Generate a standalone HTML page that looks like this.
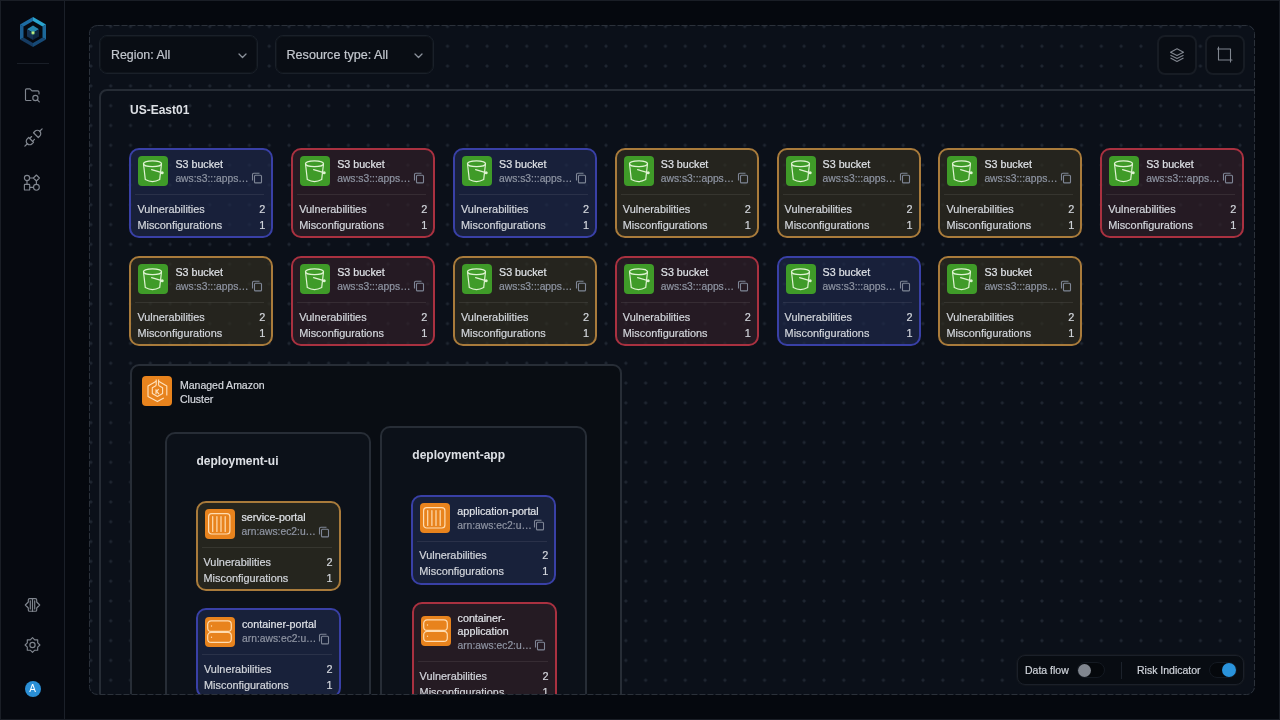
<!DOCTYPE html>
<html><head><meta charset="utf-8"><style>
*{margin:0;padding:0;box-sizing:border-box}
html,body{width:1280px;height:720px;overflow:hidden;background:#05080e;font-family:"Liberation Sans",sans-serif;position:relative}
#root{position:absolute;left:0;top:0;width:1280px;height:720px;will-change:transform}
.abs{position:absolute}
#frame{position:absolute;left:0;top:0;width:1280px;height:720px;border:1px solid #1a1e26;pointer-events:none;z-index:50}
#side{position:absolute;left:0;top:0;width:65px;height:720px;background:#060910;border-right:1px solid #1b2029}
#side svg.i{position:absolute}
#main{position:absolute;left:89px;top:25px;width:1166px;height:670px;border:1px solid transparent;border-radius:8px;overflow:hidden;
 background-color:#0b1019;
 background-image:radial-gradient(circle at center,#1f2631 0,#1f2631 1.2px,rgba(0,0,0,0) 1.9px);
 background-size:19.82px 19.82px;background-position:10.8px 10.35px}
.sel{position:absolute;top:9px;height:39px;border:1px solid #1a2029;box-shadow:inset 0 0 0 1px #10151c;border-radius:8px;background:#090d14;color:#c3c7ce;font-size:12.3px}
.sel span{position:absolute;left:11px;top:11.5px;line-height:14px;white-space:nowrap}
.sel svg{position:absolute;top:17px}
.btn{position:absolute;top:9px;width:40px;height:40px;border:2px solid #171c24;border-radius:8px;background:#090d14}
.btn svg{position:absolute}
#region{position:absolute;left:9px;top:63px;width:1300px;height:800px;border:2px solid #262c35;border-radius:8px}
.rt{position:absolute;color:#dde0e5;font-weight:bold;white-space:nowrap}
.card{position:absolute;border:2px solid;border-radius:10px;color:#d6d9df}
.card .ic{position:absolute;left:7px;top:6px;width:30px;height:30px;border-radius:4px}
.card .ic svg{position:absolute;left:0;top:0}
.ic.g{background:#3f9b28}
.ic.o{background:#e8831d}
.card .ttl{position:absolute;left:44px;top:8px;font-size:10.7px;line-height:13px;color:#dfe2e7;white-space:nowrap}
.card .sub{position:absolute;left:44px;font-size:10.3px;line-height:12px;color:#8f95a3;white-space:nowrap}
.card .cp{position:absolute;left:120px;width:12px;height:12px}
.card .cp svg{position:absolute;left:0;top:0}
.card .dv{position:absolute;left:4px;right:7px;height:1px;background:rgba(255,255,255,0.08)}
.card .m{position:absolute;left:6px;right:6px;font-size:10.9px;line-height:12px;color:#d3d6dc;white-space:nowrap}
.card .m b{position:absolute;right:0;top:0;font-weight:normal}
#cluster{position:absolute;left:39.5px;top:338px;width:492.5px;height:400px;border:2px solid #272d36;border-radius:9px;background:#090d13}
.dep{position:absolute;height:400px;border:2px solid #272d36;border-radius:10px;background:#0c1119}
#dock{position:absolute;left:927px;top:629px;width:227px;height:30px;border:1px solid #1b2029;box-shadow:0 0 0 1px #11151c;border-radius:8px;background:#080c12;color:#cfd3da;font-size:10.5px}
#dock span{position:absolute;top:8px;line-height:12px;white-space:nowrap}
.card .m,.card .ttl,.card .sub,.sel span,#dock span,.mg{-webkit-text-stroke:0.2px currentColor}
.tg{position:absolute;top:6px;width:28px;height:16px;border-radius:8px;background:#05080c;border:1px solid #141a22}
.tg i{position:absolute;top:0px;width:14px;height:14px;border-radius:7px}
</style></head><body><div id="root">
<div id="side">
 <svg class="i" style="left:18px;top:15px" width="30" height="35" viewBox="0 0 30 35">
  <defs>
   <radialGradient id="gl"><stop offset="0" stop-color="#f2ffb0"/><stop offset="0.4" stop-color="#a6dc6e"/><stop offset="1" stop-color="#2b8a8a" stop-opacity="0"/></radialGradient>
   <filter id="sf" x="-20%" y="-20%" width="140%" height="140%"><feGaussianBlur stdDeviation="0.4"/></filter>
  </defs>
  <g filter="url(#sf)">
  <polygon points="15,2 28,9.5 24.5,11.5 15,6" fill="#2aa4cf"/>
  <polygon points="28,9.5 28,24.5 24.5,22.5 24.5,11.5" fill="#1c689a"/>
  <polygon points="28,24.5 15,32 15,28 24.5,22.5" fill="#164a76"/>
  <polygon points="15,32 2,24.5 5.5,22.5 15,28" fill="#133b62"/>
  <polygon points="2,24.5 2,9.5 5.5,11.5 5.5,22.5" fill="#1b5f93"/>
  <polygon points="2,9.5 15,2 15,6 5.5,11.5" fill="#1e6ca3"/>
  <polygon points="15,10.6 21,14.2 15,17.8 9,14.2" fill="#2785ad"/>
  <polygon points="9,14.2 15,17.8 15,25 9,21.4" fill="#123052"/>
  <polygon points="21,14.2 15,17.8 15,25 21,21.4" fill="#0d2540"/>
  <circle cx="15" cy="17.8" r="2.6" fill="url(#gl)"/>
  </g>
 </svg>
 <div class="abs" style="left:17px;top:63px;width:32px;height:1px;background:#191e27"></div>
 <svg class="i" style="left:24px;top:87px" width="17" height="16" viewBox="0 0 17 16"><g fill="none" stroke="#80868f" stroke-width="1.15" stroke-linecap="round" stroke-linejoin="round"><path d="M7 13.5 H2.6 Q1.5 13.5 1.5 12.4 V3 Q1.5 1.9 2.6 1.9 H6 L8 3.9 H13.6 Q15 3.9 15 5.2 V7"/><circle cx="11.4" cy="11" r="2.6"/><path d="M13.3 12.9 L15.3 14.9"/></g></svg>
 <svg class="i" style="left:21.5px;top:126px" width="23" height="23" viewBox="0 0 24 24"><g fill="none" stroke="#80868f" stroke-width="1.25" stroke-linecap="round" stroke-linejoin="round"><path d="M7 12l5 5l-1.5 1.5a3.536 3.536 0 1 1 -5 -5l1.5 -1.5z"/><path d="M17 12l-5 -5l1.5 -1.5a3.536 3.536 0 1 1 5 5l-1.5 1.5z"/><path d="M3 21l2.5 -2.5"/><path d="M18.5 5.5l2.5 -2.5"/><path d="M10 11l-2 2"/><path d="M13 14l-2 2"/></g></svg>
 <svg class="i" style="left:23px;top:173px" width="19" height="19" viewBox="0 0 19 19"><g fill="none" stroke="#80868f" stroke-width="1.15" stroke-linejoin="round"><circle cx="4" cy="5" r="2.6"/><path d="M13.4 2 L16.4 5 L13.4 8 L10.4 5 Z"/><rect x="1.4" y="11.4" width="5.3" height="5.6" rx="0.6"/><circle cx="13.4" cy="14.3" r="2.9"/><path d="M6.6 5 H10.4 M4 7.6 V11.4 M13.4 8 V11.4 M6.7 14.3 H10.5"/></g></svg>
 <svg class="i" style="left:24px;top:597px" width="17" height="16" viewBox="0 0 17 16"><g fill="none" stroke="#80868f" stroke-width="1.15" stroke-linecap="round" stroke-linejoin="round"><path d="M8.5 1.6 V14.2"/><path d="M8.5 1.6 H5.6 Q4.3 1.6 4.3 2.9 V5 L1.3 8 L4.3 11 V12.9 Q4.3 14.2 5.6 14.2 H8.5"/><path d="M8.5 1.6 H11.4 Q12.7 1.6 12.7 2.9 V5 L15.7 8 L12.7 11 V12.9 Q12.7 14.2 11.4 14.2 H8.5"/><path d="M6.3 3.8 V12 M10.7 3.8 V12"/></g></svg>
 <svg class="i" style="left:24px;top:636px" width="17" height="18" viewBox="-8.5 -9 17 18"><g fill="none" stroke="#80868f" stroke-width="1.15" stroke-linejoin="round"><path d="M0 -7.4 L2.2 -5.2 H5.2 V-2.2 L7.4 0 L5.2 2.2 V5.2 H2.2 L0 7.4 L-2.2 5.2 H-5.2 V2.2 L-7.4 0 L-5.2 -2.2 V-5.2 H-2.2 Z"/><circle cx="0" cy="0" r="2.6"/></g></svg>
 <div class="abs" style="left:24.6px;top:680.8px;width:16px;height:16px;border-radius:8px;background:#2a8fd6;color:#fff;font-size:10px;font-weight:normal;text-align:center;line-height:16px">A</div>
</div>

<div id="main">
 <div class="sel" style="left:9px;width:159px"><span style="font-size:12.4px">Region: All</span><svg style="left:138px" width="9" height="6" viewBox="0 0 9 6"><path d="M1 1 L4.5 4.5 L8 1" fill="none" stroke="#8c929c" stroke-width="1.3" stroke-linecap="round" stroke-linejoin="round"/></svg></div>
 <div class="sel" style="left:184.5px;width:159px"><span style="font-size:12.6px;top:11.6px">Resource type: All</span><svg style="left:138px" width="9" height="6" viewBox="0 0 9 6"><path d="M1 1 L4.5 4.5 L8 1" fill="none" stroke="#8c929c" stroke-width="1.3" stroke-linecap="round" stroke-linejoin="round"/></svg></div>
 <div class="btn" style="left:1067px">
  <svg style="left:11px;top:11px" width="15" height="15" viewBox="0 0 15 15"><g fill="none" stroke="#80868f" stroke-width="1.1" stroke-linejoin="round"><path d="M7 0.8 L13.5 4.2 L7 7.6 L0.5 4.2 Z"/><path d="M0.5 7.2 L7 10.6 L13.5 7.2"/><path d="M0.5 10 L7 13.4 L13.5 10"/></g></svg>
 </div>
 <div class="btn" style="left:1115px">
  <svg style="left:10px;top:9px" width="17" height="17" viewBox="0 0 17 17"><g fill="none" stroke="#80868f" stroke-width="1.1" stroke-linecap="round" stroke-linejoin="round"><path d="M1.5 1 V14 H15"/><path d="M0 3 H13.5 V16"/></g></svg>
 </div>
 <div id="region"></div>
 <div class="rt" style="left:40px;top:76.7px;font-size:12px">US-East01</div>
 <div class="card" style="left:39.4px;top:121.5px;width:144px;height:90px;border-color:#3940a6;background:rgba(30,40,72,0.7)">
<div class="ic g" style="top:6px"><svg width="30" height="30" viewBox="0 0 30 30"><g fill="none" stroke="#dff3d2" stroke-width="1.2" stroke-linecap="round" stroke-linejoin="round"><ellipse cx="14.5" cy="7.8" rx="9" ry="2.9"/><path d="M5.5 7.8 L7.3 23.6 Q14.5 27.6 21.7 23.6 L23.5 7.8"/><path d="M13.6 13.6 L23.8 16.6"/></g><circle cx="24.2" cy="16.7" r="1.5" fill="#dff3d2"/></svg></div>
<div class="ttl">S3 bucket</div>
<div class="sub" style="top:23px">aws:s3:::apps…</div>
<div class="cp" style="top:22.5px"><svg width="12" height="12" viewBox="0 0 12 12"><g fill="none" stroke="#7f8696" stroke-width="1.1"><path d="M1.5 8.5 V2.5 Q1.5 1.2 2.8 1.2 H8.5"/><rect x="3.5" y="3.3" width="7" height="7.6" rx="1"/></g></svg></div>
<div class="dv" style="top:44px"></div>
<div class="m" style="top:53.5px"><span>Vulnerabilities</span><b>2</b></div>
<div class="m" style="top:69.5px"><span>Misconfigurations</span><b>1</b></div>
</div><div class="card" style="left:201.2px;top:121.5px;width:144px;height:90px;border-color:#a93140;background:rgba(49,32,40,0.7)">
<div class="ic g" style="top:6px"><svg width="30" height="30" viewBox="0 0 30 30"><g fill="none" stroke="#dff3d2" stroke-width="1.2" stroke-linecap="round" stroke-linejoin="round"><ellipse cx="14.5" cy="7.8" rx="9" ry="2.9"/><path d="M5.5 7.8 L7.3 23.6 Q14.5 27.6 21.7 23.6 L23.5 7.8"/><path d="M13.6 13.6 L23.8 16.6"/></g><circle cx="24.2" cy="16.7" r="1.5" fill="#dff3d2"/></svg></div>
<div class="ttl">S3 bucket</div>
<div class="sub" style="top:23px">aws:s3:::apps…</div>
<div class="cp" style="top:22.5px"><svg width="12" height="12" viewBox="0 0 12 12"><g fill="none" stroke="#7f8696" stroke-width="1.1"><path d="M1.5 8.5 V2.5 Q1.5 1.2 2.8 1.2 H8.5"/><rect x="3.5" y="3.3" width="7" height="7.6" rx="1"/></g></svg></div>
<div class="dv" style="top:44px"></div>
<div class="m" style="top:53.5px"><span>Vulnerabilities</span><b>2</b></div>
<div class="m" style="top:69.5px"><span>Misconfigurations</span><b>1</b></div>
</div><div class="card" style="left:363.0px;top:121.5px;width:144px;height:90px;border-color:#3940a6;background:rgba(30,40,72,0.7)">
<div class="ic g" style="top:6px"><svg width="30" height="30" viewBox="0 0 30 30"><g fill="none" stroke="#dff3d2" stroke-width="1.2" stroke-linecap="round" stroke-linejoin="round"><ellipse cx="14.5" cy="7.8" rx="9" ry="2.9"/><path d="M5.5 7.8 L7.3 23.6 Q14.5 27.6 21.7 23.6 L23.5 7.8"/><path d="M13.6 13.6 L23.8 16.6"/></g><circle cx="24.2" cy="16.7" r="1.5" fill="#dff3d2"/></svg></div>
<div class="ttl">S3 bucket</div>
<div class="sub" style="top:23px">aws:s3:::apps…</div>
<div class="cp" style="top:22.5px"><svg width="12" height="12" viewBox="0 0 12 12"><g fill="none" stroke="#7f8696" stroke-width="1.1"><path d="M1.5 8.5 V2.5 Q1.5 1.2 2.8 1.2 H8.5"/><rect x="3.5" y="3.3" width="7" height="7.6" rx="1"/></g></svg></div>
<div class="dv" style="top:44px"></div>
<div class="m" style="top:53.5px"><span>Vulnerabilities</span><b>2</b></div>
<div class="m" style="top:69.5px"><span>Misconfigurations</span><b>1</b></div>
</div><div class="card" style="left:524.8px;top:121.5px;width:144px;height:90px;border-color:#a97b3b;background:rgba(49,45,33,0.7)">
<div class="ic g" style="top:6px"><svg width="30" height="30" viewBox="0 0 30 30"><g fill="none" stroke="#dff3d2" stroke-width="1.2" stroke-linecap="round" stroke-linejoin="round"><ellipse cx="14.5" cy="7.8" rx="9" ry="2.9"/><path d="M5.5 7.8 L7.3 23.6 Q14.5 27.6 21.7 23.6 L23.5 7.8"/><path d="M13.6 13.6 L23.8 16.6"/></g><circle cx="24.2" cy="16.7" r="1.5" fill="#dff3d2"/></svg></div>
<div class="ttl">S3 bucket</div>
<div class="sub" style="top:23px">aws:s3:::apps…</div>
<div class="cp" style="top:22.5px"><svg width="12" height="12" viewBox="0 0 12 12"><g fill="none" stroke="#7f8696" stroke-width="1.1"><path d="M1.5 8.5 V2.5 Q1.5 1.2 2.8 1.2 H8.5"/><rect x="3.5" y="3.3" width="7" height="7.6" rx="1"/></g></svg></div>
<div class="dv" style="top:44px"></div>
<div class="m" style="top:53.5px"><span>Vulnerabilities</span><b>2</b></div>
<div class="m" style="top:69.5px"><span>Misconfigurations</span><b>1</b></div>
</div><div class="card" style="left:686.6px;top:121.5px;width:144px;height:90px;border-color:#a97b3b;background:rgba(49,45,33,0.7)">
<div class="ic g" style="top:6px"><svg width="30" height="30" viewBox="0 0 30 30"><g fill="none" stroke="#dff3d2" stroke-width="1.2" stroke-linecap="round" stroke-linejoin="round"><ellipse cx="14.5" cy="7.8" rx="9" ry="2.9"/><path d="M5.5 7.8 L7.3 23.6 Q14.5 27.6 21.7 23.6 L23.5 7.8"/><path d="M13.6 13.6 L23.8 16.6"/></g><circle cx="24.2" cy="16.7" r="1.5" fill="#dff3d2"/></svg></div>
<div class="ttl">S3 bucket</div>
<div class="sub" style="top:23px">aws:s3:::apps…</div>
<div class="cp" style="top:22.5px"><svg width="12" height="12" viewBox="0 0 12 12"><g fill="none" stroke="#7f8696" stroke-width="1.1"><path d="M1.5 8.5 V2.5 Q1.5 1.2 2.8 1.2 H8.5"/><rect x="3.5" y="3.3" width="7" height="7.6" rx="1"/></g></svg></div>
<div class="dv" style="top:44px"></div>
<div class="m" style="top:53.5px"><span>Vulnerabilities</span><b>2</b></div>
<div class="m" style="top:69.5px"><span>Misconfigurations</span><b>1</b></div>
</div><div class="card" style="left:848.4px;top:121.5px;width:144px;height:90px;border-color:#a97b3b;background:rgba(49,45,33,0.7)">
<div class="ic g" style="top:6px"><svg width="30" height="30" viewBox="0 0 30 30"><g fill="none" stroke="#dff3d2" stroke-width="1.2" stroke-linecap="round" stroke-linejoin="round"><ellipse cx="14.5" cy="7.8" rx="9" ry="2.9"/><path d="M5.5 7.8 L7.3 23.6 Q14.5 27.6 21.7 23.6 L23.5 7.8"/><path d="M13.6 13.6 L23.8 16.6"/></g><circle cx="24.2" cy="16.7" r="1.5" fill="#dff3d2"/></svg></div>
<div class="ttl">S3 bucket</div>
<div class="sub" style="top:23px">aws:s3:::apps…</div>
<div class="cp" style="top:22.5px"><svg width="12" height="12" viewBox="0 0 12 12"><g fill="none" stroke="#7f8696" stroke-width="1.1"><path d="M1.5 8.5 V2.5 Q1.5 1.2 2.8 1.2 H8.5"/><rect x="3.5" y="3.3" width="7" height="7.6" rx="1"/></g></svg></div>
<div class="dv" style="top:44px"></div>
<div class="m" style="top:53.5px"><span>Vulnerabilities</span><b>2</b></div>
<div class="m" style="top:69.5px"><span>Misconfigurations</span><b>1</b></div>
</div><div class="card" style="left:1010.2px;top:121.5px;width:144px;height:90px;border-color:#a93140;background:rgba(49,32,40,0.7)">
<div class="ic g" style="top:6px"><svg width="30" height="30" viewBox="0 0 30 30"><g fill="none" stroke="#dff3d2" stroke-width="1.2" stroke-linecap="round" stroke-linejoin="round"><ellipse cx="14.5" cy="7.8" rx="9" ry="2.9"/><path d="M5.5 7.8 L7.3 23.6 Q14.5 27.6 21.7 23.6 L23.5 7.8"/><path d="M13.6 13.6 L23.8 16.6"/></g><circle cx="24.2" cy="16.7" r="1.5" fill="#dff3d2"/></svg></div>
<div class="ttl">S3 bucket</div>
<div class="sub" style="top:23px">aws:s3:::apps…</div>
<div class="cp" style="top:22.5px"><svg width="12" height="12" viewBox="0 0 12 12"><g fill="none" stroke="#7f8696" stroke-width="1.1"><path d="M1.5 8.5 V2.5 Q1.5 1.2 2.8 1.2 H8.5"/><rect x="3.5" y="3.3" width="7" height="7.6" rx="1"/></g></svg></div>
<div class="dv" style="top:44px"></div>
<div class="m" style="top:53.5px"><span>Vulnerabilities</span><b>2</b></div>
<div class="m" style="top:69.5px"><span>Misconfigurations</span><b>1</b></div>
</div><div class="card" style="left:39.4px;top:229.5px;width:144px;height:90px;border-color:#a97b3b;background:rgba(49,45,33,0.7)">
<div class="ic g" style="top:6px"><svg width="30" height="30" viewBox="0 0 30 30"><g fill="none" stroke="#dff3d2" stroke-width="1.2" stroke-linecap="round" stroke-linejoin="round"><ellipse cx="14.5" cy="7.8" rx="9" ry="2.9"/><path d="M5.5 7.8 L7.3 23.6 Q14.5 27.6 21.7 23.6 L23.5 7.8"/><path d="M13.6 13.6 L23.8 16.6"/></g><circle cx="24.2" cy="16.7" r="1.5" fill="#dff3d2"/></svg></div>
<div class="ttl">S3 bucket</div>
<div class="sub" style="top:23px">aws:s3:::apps…</div>
<div class="cp" style="top:22.5px"><svg width="12" height="12" viewBox="0 0 12 12"><g fill="none" stroke="#7f8696" stroke-width="1.1"><path d="M1.5 8.5 V2.5 Q1.5 1.2 2.8 1.2 H8.5"/><rect x="3.5" y="3.3" width="7" height="7.6" rx="1"/></g></svg></div>
<div class="dv" style="top:44px"></div>
<div class="m" style="top:53.5px"><span>Vulnerabilities</span><b>2</b></div>
<div class="m" style="top:69.5px"><span>Misconfigurations</span><b>1</b></div>
</div><div class="card" style="left:201.2px;top:229.5px;width:144px;height:90px;border-color:#a93140;background:rgba(49,32,40,0.7)">
<div class="ic g" style="top:6px"><svg width="30" height="30" viewBox="0 0 30 30"><g fill="none" stroke="#dff3d2" stroke-width="1.2" stroke-linecap="round" stroke-linejoin="round"><ellipse cx="14.5" cy="7.8" rx="9" ry="2.9"/><path d="M5.5 7.8 L7.3 23.6 Q14.5 27.6 21.7 23.6 L23.5 7.8"/><path d="M13.6 13.6 L23.8 16.6"/></g><circle cx="24.2" cy="16.7" r="1.5" fill="#dff3d2"/></svg></div>
<div class="ttl">S3 bucket</div>
<div class="sub" style="top:23px">aws:s3:::apps…</div>
<div class="cp" style="top:22.5px"><svg width="12" height="12" viewBox="0 0 12 12"><g fill="none" stroke="#7f8696" stroke-width="1.1"><path d="M1.5 8.5 V2.5 Q1.5 1.2 2.8 1.2 H8.5"/><rect x="3.5" y="3.3" width="7" height="7.6" rx="1"/></g></svg></div>
<div class="dv" style="top:44px"></div>
<div class="m" style="top:53.5px"><span>Vulnerabilities</span><b>2</b></div>
<div class="m" style="top:69.5px"><span>Misconfigurations</span><b>1</b></div>
</div><div class="card" style="left:363.0px;top:229.5px;width:144px;height:90px;border-color:#a97b3b;background:rgba(49,45,33,0.7)">
<div class="ic g" style="top:6px"><svg width="30" height="30" viewBox="0 0 30 30"><g fill="none" stroke="#dff3d2" stroke-width="1.2" stroke-linecap="round" stroke-linejoin="round"><ellipse cx="14.5" cy="7.8" rx="9" ry="2.9"/><path d="M5.5 7.8 L7.3 23.6 Q14.5 27.6 21.7 23.6 L23.5 7.8"/><path d="M13.6 13.6 L23.8 16.6"/></g><circle cx="24.2" cy="16.7" r="1.5" fill="#dff3d2"/></svg></div>
<div class="ttl">S3 bucket</div>
<div class="sub" style="top:23px">aws:s3:::apps…</div>
<div class="cp" style="top:22.5px"><svg width="12" height="12" viewBox="0 0 12 12"><g fill="none" stroke="#7f8696" stroke-width="1.1"><path d="M1.5 8.5 V2.5 Q1.5 1.2 2.8 1.2 H8.5"/><rect x="3.5" y="3.3" width="7" height="7.6" rx="1"/></g></svg></div>
<div class="dv" style="top:44px"></div>
<div class="m" style="top:53.5px"><span>Vulnerabilities</span><b>2</b></div>
<div class="m" style="top:69.5px"><span>Misconfigurations</span><b>1</b></div>
</div><div class="card" style="left:524.8px;top:229.5px;width:144px;height:90px;border-color:#a93140;background:rgba(49,32,40,0.7)">
<div class="ic g" style="top:6px"><svg width="30" height="30" viewBox="0 0 30 30"><g fill="none" stroke="#dff3d2" stroke-width="1.2" stroke-linecap="round" stroke-linejoin="round"><ellipse cx="14.5" cy="7.8" rx="9" ry="2.9"/><path d="M5.5 7.8 L7.3 23.6 Q14.5 27.6 21.7 23.6 L23.5 7.8"/><path d="M13.6 13.6 L23.8 16.6"/></g><circle cx="24.2" cy="16.7" r="1.5" fill="#dff3d2"/></svg></div>
<div class="ttl">S3 bucket</div>
<div class="sub" style="top:23px">aws:s3:::apps…</div>
<div class="cp" style="top:22.5px"><svg width="12" height="12" viewBox="0 0 12 12"><g fill="none" stroke="#7f8696" stroke-width="1.1"><path d="M1.5 8.5 V2.5 Q1.5 1.2 2.8 1.2 H8.5"/><rect x="3.5" y="3.3" width="7" height="7.6" rx="1"/></g></svg></div>
<div class="dv" style="top:44px"></div>
<div class="m" style="top:53.5px"><span>Vulnerabilities</span><b>2</b></div>
<div class="m" style="top:69.5px"><span>Misconfigurations</span><b>1</b></div>
</div><div class="card" style="left:686.6px;top:229.5px;width:144px;height:90px;border-color:#3940a6;background:rgba(30,40,72,0.7)">
<div class="ic g" style="top:6px"><svg width="30" height="30" viewBox="0 0 30 30"><g fill="none" stroke="#dff3d2" stroke-width="1.2" stroke-linecap="round" stroke-linejoin="round"><ellipse cx="14.5" cy="7.8" rx="9" ry="2.9"/><path d="M5.5 7.8 L7.3 23.6 Q14.5 27.6 21.7 23.6 L23.5 7.8"/><path d="M13.6 13.6 L23.8 16.6"/></g><circle cx="24.2" cy="16.7" r="1.5" fill="#dff3d2"/></svg></div>
<div class="ttl">S3 bucket</div>
<div class="sub" style="top:23px">aws:s3:::apps…</div>
<div class="cp" style="top:22.5px"><svg width="12" height="12" viewBox="0 0 12 12"><g fill="none" stroke="#7f8696" stroke-width="1.1"><path d="M1.5 8.5 V2.5 Q1.5 1.2 2.8 1.2 H8.5"/><rect x="3.5" y="3.3" width="7" height="7.6" rx="1"/></g></svg></div>
<div class="dv" style="top:44px"></div>
<div class="m" style="top:53.5px"><span>Vulnerabilities</span><b>2</b></div>
<div class="m" style="top:69.5px"><span>Misconfigurations</span><b>1</b></div>
</div><div class="card" style="left:848.4px;top:229.5px;width:144px;height:90px;border-color:#a97b3b;background:rgba(49,45,33,0.7)">
<div class="ic g" style="top:6px"><svg width="30" height="30" viewBox="0 0 30 30"><g fill="none" stroke="#dff3d2" stroke-width="1.2" stroke-linecap="round" stroke-linejoin="round"><ellipse cx="14.5" cy="7.8" rx="9" ry="2.9"/><path d="M5.5 7.8 L7.3 23.6 Q14.5 27.6 21.7 23.6 L23.5 7.8"/><path d="M13.6 13.6 L23.8 16.6"/></g><circle cx="24.2" cy="16.7" r="1.5" fill="#dff3d2"/></svg></div>
<div class="ttl">S3 bucket</div>
<div class="sub" style="top:23px">aws:s3:::apps…</div>
<div class="cp" style="top:22.5px"><svg width="12" height="12" viewBox="0 0 12 12"><g fill="none" stroke="#7f8696" stroke-width="1.1"><path d="M1.5 8.5 V2.5 Q1.5 1.2 2.8 1.2 H8.5"/><rect x="3.5" y="3.3" width="7" height="7.6" rx="1"/></g></svg></div>
<div class="dv" style="top:44px"></div>
<div class="m" style="top:53.5px"><span>Vulnerabilities</span><b>2</b></div>
<div class="m" style="top:69.5px"><span>Misconfigurations</span><b>1</b></div>
</div>
 <div id="cluster">
  <div class="abs" style="left:10.5px;top:10px;width:30px;height:30px;border-radius:4px;background:#e8831d"><svg width="30" height="30" viewBox="0 0 30 30"><g fill="none" stroke="#ffe2bd" stroke-width="1.1" stroke-linejoin="round"><path d="M14.2 5.2 L6 9.9 V20.6 L15.4 25.6 L21.8 22.1"/><path d="M16.6 5.2 L24.8 9.9 V19.6"/><path d="M14.2 9.6 L10.3 11.8 V17.6 L15.4 20.5 L20.6 17.6 V11.8 L16.6 9.6"/><path d="M14.2 3.6 V9.6 M16.6 3.6 V9.6"/><path d="M14 13.2 V18.2 M14 16 L16.7 13.2 M14.8 15.3 L17 18.2"/></g></svg></div>
  <div class="abs mg" style="left:48.5px;top:12px;font-size:10.5px;line-height:14px;color:#d6d9df;white-space:nowrap">Managed Amazon<br>Cluster</div>
  <div class="dep" style="left:33px;top:66px;width:206.4px">
   <div class="rt" style="left:30px;top:20px;font-size:12px">deployment-ui</div>
   <div class="card" style="left:29px;top:67px;width:145px;height:90px;border-color:#a97b3b;background:rgba(49,45,33,0.7)">
<div class="ic o" style="top:6px"><svg width="30" height="30" viewBox="0 0 30 30"><g fill="none" stroke="#ffdcb0" stroke-width="1.2" stroke-linecap="round"><rect x="3.6" y="4.7" width="21.3" height="20.3" rx="3"/><path d="M7.7 7.5V22.5M11.9 7.5V22.5M16 7.5V22.5M20.2 7.5V22.5"/></g></svg></div>
<div class="ttl">service-portal</div>
<div class="sub" style="top:23px">arn:aws:ec2:u…</div>
<div class="cp" style="top:22.5px"><svg width="12" height="12" viewBox="0 0 12 12"><g fill="none" stroke="#7f8696" stroke-width="1.1"><path d="M1.5 8.5 V2.5 Q1.5 1.2 2.8 1.2 H8.5"/><rect x="3.5" y="3.3" width="7" height="7.6" rx="1"/></g></svg></div>
<div class="dv" style="top:44px"></div>
<div class="m" style="top:52.8px"><span>Vulnerabilities</span><b>2</b></div>
<div class="m" style="top:68.8px"><span>Misconfigurations</span><b>1</b></div>
</div>
   <div class="card" style="left:29.5px;top:174px;width:144.5px;height:90px;border-color:#3940a6;background:rgba(30,40,72,0.7)">
<div class="ic o" style="top:7px"><svg width="30" height="30" viewBox="0 0 30 30"><g fill="none" stroke="#ffdcb0" stroke-width="1.2"><rect x="2.7" y="3.9" width="23.6" height="10.5" rx="3.5"/><rect x="2.7" y="15.3" width="23.6" height="10.1" rx="3.5"/></g><circle cx="6.5" cy="9" r="0.7" fill="#ffdcb0"/><circle cx="6.5" cy="20.3" r="0.7" fill="#ffdcb0"/></svg></div>
<div class="ttl">container-portal</div>
<div class="sub" style="top:23px">arn:aws:ec2:u…</div>
<div class="cp" style="top:22.5px"><svg width="12" height="12" viewBox="0 0 12 12"><g fill="none" stroke="#7f8696" stroke-width="1.1"><path d="M1.5 8.5 V2.5 Q1.5 1.2 2.8 1.2 H8.5"/><rect x="3.5" y="3.3" width="7" height="7.6" rx="1"/></g></svg></div>
<div class="dv" style="top:44px"></div>
<div class="m" style="top:52.8px"><span>Vulnerabilities</span><b>2</b></div>
<div class="m" style="top:68.8px"><span>Misconfigurations</span><b>1</b></div>
</div>
  </div>
  <div class="dep" style="left:248.8px;top:59.6px;width:206.7px">
   <div class="rt" style="left:30px;top:20px;font-size:12px">deployment-app</div>
   <div class="card" style="left:29px;top:67px;width:145px;height:90px;border-color:#3940a6;background:rgba(30,40,72,0.7)">
<div class="ic o" style="top:6px"><svg width="30" height="30" viewBox="0 0 30 30"><g fill="none" stroke="#ffdcb0" stroke-width="1.2" stroke-linecap="round"><rect x="3.6" y="4.7" width="21.3" height="20.3" rx="3"/><path d="M7.7 7.5V22.5M11.9 7.5V22.5M16 7.5V22.5M20.2 7.5V22.5"/></g></svg></div>
<div class="ttl">application-portal</div>
<div class="sub" style="top:23px">arn:aws:ec2:u…</div>
<div class="cp" style="top:22.5px"><svg width="12" height="12" viewBox="0 0 12 12"><g fill="none" stroke="#7f8696" stroke-width="1.1"><path d="M1.5 8.5 V2.5 Q1.5 1.2 2.8 1.2 H8.5"/><rect x="3.5" y="3.3" width="7" height="7.6" rx="1"/></g></svg></div>
<div class="dv" style="top:44px"></div>
<div class="m" style="top:52.5px"><span>Vulnerabilities</span><b>2</b></div>
<div class="m" style="top:68.5px"><span>Misconfigurations</span><b>1</b></div>
</div>
   <div class="card" style="left:29.3px;top:174.2px;width:145px;height:103px;border-color:#a93140;background:rgba(49,32,40,0.7)">
<div class="ic o" style="top:12.5px"><svg width="30" height="30" viewBox="0 0 30 30"><g fill="none" stroke="#ffdcb0" stroke-width="1.2"><rect x="2.7" y="3.9" width="23.6" height="10.5" rx="3.5"/><rect x="2.7" y="15.3" width="23.6" height="10.1" rx="3.5"/></g><circle cx="6.5" cy="9" r="0.7" fill="#ffdcb0"/><circle cx="6.5" cy="20.3" r="0.7" fill="#ffdcb0"/></svg></div>
<div class="ttl">container-<br>application</div>
<div class="sub" style="top:36px">arn:aws:ec2:u…</div>
<div class="cp" style="top:35.5px"><svg width="12" height="12" viewBox="0 0 12 12"><g fill="none" stroke="#7f8696" stroke-width="1.1"><path d="M1.5 8.5 V2.5 Q1.5 1.2 2.8 1.2 H8.5"/><rect x="3.5" y="3.3" width="7" height="7.6" rx="1"/></g></svg></div>
<div class="dv" style="top:57px"></div>
<div class="m" style="top:66.5px"><span>Vulnerabilities</span><b>2</b></div>
<div class="m" style="top:82.5px"><span>Misconfigurations</span><b>1</b></div>
</div>
  </div>
 </div>
 <div id="dock">
  <span style="left:7px">Data flow</span>
  <div class="tg" style="left:58.5px"><i style="left:0.5px;top:0.5px;width:13px;height:13px;background:#80868f"></i></div>
  <div class="abs" style="left:102.5px;top:6px;width:1px;height:17px;background:#1c222b"></div>
  <span style="left:119px">Risk Indicator</span>
  <div class="tg" style="left:191px"><i style="left:12px;background:#2a93db"></i></div>
 </div>
</div>
<svg class="abs" style="left:89px;top:25px;z-index:40" width="1166" height="670"><rect x="0.5" y="0.5" width="1165" height="669" rx="8" fill="none" stroke="#2b313a" stroke-width="1" stroke-dasharray="6 2"/></svg><div id="frame"></div></div></body></html>
